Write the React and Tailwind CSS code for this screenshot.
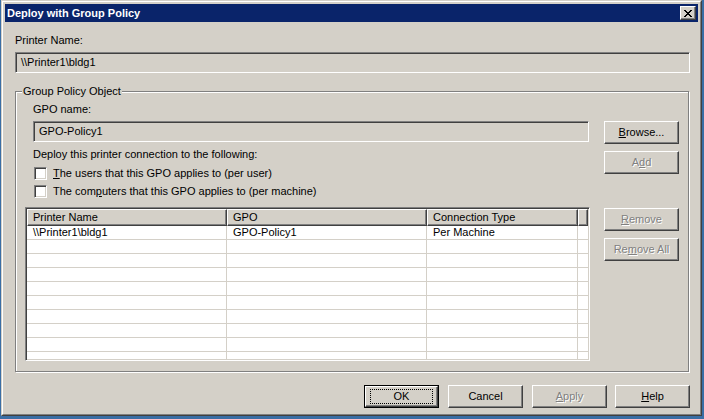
import React from "react";

const raised =
  "border border-t-white border-l-white border-r-[#404040] border-b-[#404040] shadow-[inset_-1px_-1px_0_#808080]";
const sunken =
  "border border-t-[#808080] border-l-[#808080] border-r-white border-b-white shadow-[inset_1px_1px_0_#404040,inset_-1px_-1px_0_#d4d0c8]";

function Btn({ children, disabled, isDefault, className = "" }) {
  const txt = disabled ? "text-[#808080] [text-shadow:1px_1px_0_#fff]" : "text-black";
  if (isDefault) {
    return (
      <div className={"w-[75px] h-[23px] border border-black " + className}>
        <div className={"w-full h-full flex items-center justify-center " + raised}>
          <div className={"w-[63px] h-[15px] border border-dotted border-black flex items-center justify-center " + txt}>
            {children}
          </div>
        </div>
      </div>
    );
  }
  return (
    <div className={"w-[75px] h-[23px] flex items-center justify-center " + raised + " " + txt + " " + className}>
      {children}
    </div>
  );
}

function Check({ children }) {
  return (
    <div className="flex items-center h-[13px] ml-[9px]">
      <div className={"w-[13px] h-[13px] bg-white " + sunken} />
      <span className="ml-[6px]">{children}</span>
    </div>
  );
}

const cols = [
  { title: "Printer Name", w: "w-[200px]" },
  { title: "GPO", w: "w-[200px]" },
  { title: "Connection Type", w: "w-[151px]" },
];

const rows = [["\\\\Printer1\\bldg1", "GPO-Policy1", "Per Machine"]];
for (let i = 0; i < 9; i++) rows.push(["", "", ""]);

export default function App() {
  return (
    <div className="w-[704px] h-[419px] bg-[#3a6ea5] overflow-hidden font-['Liberation_Sans',Arial,sans-serif] text-[11px] leading-[13px] text-black">
      <div className="ml-[1px] w-[701px] h-[416px] bg-[#d4d0c8] border border-t-[#d4d0c8] border-l-[#d4d0c8] border-r-[#404040] border-b-[#404040]">
        <div className="w-full h-full border border-t-white border-l-white border-r-[#808080] border-b-[#808080] p-[2px]">
          {/* title bar */}
          <div className="h-[18px] bg-[#0a246a] flex items-center justify-between pl-[2px] pr-[2px]">
            <span className="text-white font-bold">Deploy with Group Policy</span>
            <div className={"w-[16px] h-[14px] bg-[#d4d0c8] flex items-center justify-center " + raised}>
              <svg width="8" height="7" viewBox="0 0 8 7" shapeRendering="crispEdges">
                <path
                  fill="#000"
                  d="M0 0h2v1H0zM6 0h2v1H6zM1 1h2v1H1zM5 1h2v1H5zM2 2h4v1H2zM3 3h2v1H3zM2 4h4v1H2zM1 5h2v1H1zM5 5h2v1H5zM0 6h2v1H0zM6 6h2v1H6z"
                />
              </svg>
            </div>
          </div>

          {/* body */}
          <div className="pl-[10px] flex flex-col">
            <div className="mt-[12px]">Printer Name:</div>
            <div className={"mt-[5px] w-[675px] h-[21px] bg-[#d4d0c8] flex items-center pl-[5px] " + sunken}>
              \\Printer1\bldg1
            </div>

            {/* group box */}
            <div className="relative mt-[18px] w-[674px] h-[281px] border border-[#808080] shadow-[inset_1px_1px_0_#fff,1px_1px_0_#fff]">
              <span className="absolute top-[-7px] left-[6px] px-[1px] bg-[#d4d0c8]">Group Policy Object</span>
              <div className="flex pl-[9px]">
                <div className="w-[565px] flex flex-col">
                  <div className="ml-[8px] mt-[11px]">GPO name:</div>
                  <div className={"ml-[8px] mt-[5px] w-[556px] h-[21px] bg-[#d4d0c8] flex items-center pl-[5px] " + sunken}>
                    GPO-Policy1
                  </div>
                  <div className="ml-[8px] mt-[6px]">Deploy this printer connection to the following:</div>
                  <div className="mt-[6px]">
                    <Check>
                      <u>T</u>he users that this GPO applies to (per user)
                    </Check>
                  </div>
                  <div className="mt-[5px]">
                    <Check>
                      The com<u>p</u>uters that this GPO applies to (per machine)
                    </Check>
                  </div>

                  {/* list view */}
                  <div className={"mt-[9px] w-[565px] h-[154px] bg-white p-[1px] overflow-hidden " + sunken}>
                    <div className="flex h-[17px]">
                      {cols.map((c) => (
                        <div
                          key={c.title}
                          className={c.w + " h-[17px] bg-[#d4d0c8] flex items-center pl-[5px] " + raised}
                        >
                          {c.title}
                        </div>
                      ))}
                      <div className={"flex-1 h-[17px] bg-[#d4d0c8] " + raised} />
                    </div>
                    {rows.map((r, i) => (
                      <div key={i} className="flex h-[14px] border-b border-[#d4d0c8]">
                        {r.map((v, j) => (
                          <div
                            key={j}
                            className={cols[j].w + " h-[13px] pl-[6px] border-r border-[#d4d0c8] whitespace-nowrap"}
                          >
                            {v}
                          </div>
                        ))}
                      </div>
                    ))}
                  </div>
                </div>

                <div className="ml-[14px] flex flex-col">
                  <Btn className="mt-[29px]">
                    <span>
                      <u>B</u>rowse...
                    </span>
                  </Btn>
                  <Btn className="mt-[7px]" disabled>
                    <span>
                      A<u>d</u>d
                    </span>
                  </Btn>
                  <Btn className="mt-[34px]" disabled>
                    <span>
                      <u>R</u>emove
                    </span>
                  </Btn>
                  <Btn className="mt-[7px]" disabled>
                    <span>
                      Re<u>m</u>ove All
                    </span>
                  </Btn>
                </div>
              </div>
            </div>

            {/* bottom buttons */}
            <div className="mt-[13px] w-[675px] flex justify-end">
              <Btn isDefault>OK</Btn>
              <Btn className="ml-[9px]">Cancel</Btn>
              <Btn className="ml-[9px]" disabled>
                <span>
                  <u>A</u>pply
                </span>
              </Btn>
              <Btn className="ml-[8px]">
                <span>
                  <u>H</u>elp
                </span>
              </Btn>
            </div>
          </div>
        </div>
      </div>
    </div>
  );
}
